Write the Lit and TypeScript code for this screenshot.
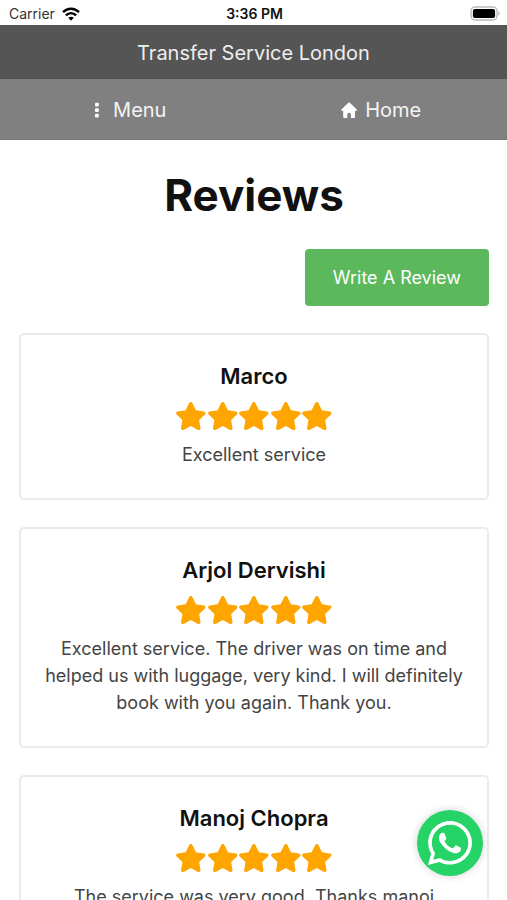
import { LitElement, html, css } from "lit";
import { customElement, property } from "lit/decorators.js";

interface Review {
  name: string;
  stars: number;
  text: string;
}

const reviews: Review[] = [
  { name: "Marco", stars: 5, text: "Excellent service" },
  {
    name: "Arjol Dervishi",
    stars: 5,
    text: "Excellent service. The driver was on time and helped us with luggage, very kind. I will definitely book with you again. Thank you.",
  },
  { name: "Manoj Chopra", stars: 5, text: "The service was very good. Thanks manoj" },
];

@customElement("status-bar")
export class StatusBar extends LitElement {
  static styles = css`
    :host {
      display: grid;
      grid-template-columns: 1fr auto 1fr;
      align-items: center;
      height: 25px;
      padding: 2px 7px 0 9px;
      box-sizing: border-box;
      background: #fff;
      color: #111;
      font-size: 14px;
      line-height: 20px;
    }
    .carrier {
      display: flex;
      align-items: center;
      gap: 7px;
      color: #333;
    }
    .wifi {
      width: 18px;
      height: 14px;
      color: #000;
    }
    .time {
      font-weight: 600;
    }
    .battery {
      justify-self: end;
      width: 30px;
      height: 15px;
    }
  `;

  render() {
    return html`
      <span class="carrier">
        Carrier
        <svg class="wifi" viewBox="0 0 18 14" fill="none" stroke="currentColor" stroke-width="2.5" aria-hidden="true">
          <path d="M1 5.2C5.6.5 12.4.5 17 5.2" />
          <path d="M3.9 8.3c3-2.9 7.2-2.9 10.2 0" />
          <path d="M9 13.7 6.2 10.8c1.6-1.5 4-1.5 5.6 0z" fill="currentColor" stroke="none" />
        </svg>
      </span>
      <span class="time">3:36 PM</span>
      <svg class="battery" viewBox="0 0 30 15" aria-hidden="true">
        <rect x="1" y="1" width="26" height="13" rx="4" fill="#fff" stroke="#bbb" stroke-width="1.4" />
        <rect x="2.9" y="2.9" width="22.2" height="9.2" rx="2" fill="#000" />
        <path d="M28.2 5.3c1.9.7 1.9 3.7 0 4.4z" fill="#bbb" />
      </svg>
    `;
  }
}

@customElement("review-card")
export class ReviewCard extends LitElement {
  @property({ attribute: false }) review!: Review;

  static styles = css`
    :host {
      display: block;
      padding: 26px 22px 30px;
      border: 2px solid #ebebeb;
      border-radius: 5px;
      text-align: center;
    }
    .name {
      margin: 0;
      color: #111;
      font-size: 22px;
      font-weight: 600;
      line-height: 30px;
    }
    .stars {
      display: flex;
      align-items: center;
      width: 158px;
      height: 50px;
      margin: 0 auto;
      color: #ffa500;
    }
    .star {
      flex: 1;
      min-width: 0;
    }
    .text {
      margin: 0;
      color: #444;
      font-size: 18px;
      line-height: 27px;
    }
  `;

  render() {
    const { name, stars, text } = this.review;
    return html`
      <h2 class="name">${name}</h2>
      <div class="stars" role="img" aria-label="${stars} out of 5 stars">
        ${Array.from(
          { length: stars },
          () => html`
            <svg class="star" viewBox="0 0 576 512" fill="currentColor" aria-hidden="true">
              <path
                d="M259.3 17.8 194 150.2 47.9 171.5c-26.2 3.8-36.7 36.1-17.7 54.6l105.7 103-25 145.5c-4.5 26.3 23.2 46 46.4 33.7L288 439.6l130.7 68.7c23.2 12.2 50.9-7.4 46.4-33.7l-25-145.5 105.7-103c19-18.5 8.5-50.8-17.7-54.6L382 150.2 316.7 17.8c-11.7-23.6-45.6-23.9-57.4 0z"
              />
            </svg>
          `,
        )}
      </div>
      <p class="text">${text}</p>
    `;
  }
}

@customElement("app-root")
export class AppRoot extends LitElement {
  static styles = css`
    :host {
      display: flex;
      flex-direction: column;
      height: 100vh;
      background: #fff;
      font-family: Inter, "Liberation Sans", sans-serif;
    }
    .title {
      padding: 15px 16px 12px;
      background: #555;
      color: #eee;
      font-size: 20px;
      line-height: 27px;
      text-align: center;
    }
    .nav {
      display: grid;
      grid-template-columns: 1fr 1fr;
      background: #808080;
      border-bottom: 1px solid #777;
    }
    .link {
      display: flex;
      align-items: center;
      justify-content: center;
      gap: 8px;
      box-sizing: border-box;
      height: 60px;
      padding: 3px 0 0;
      border: 0;
      background: none;
      color: #f4f4f4;
      font: inherit;
      font-size: 20px;
      line-height: 27px;
      text-decoration: none;
    }
    .icon {
      width: 18px;
      height: 18px;
      color: #fff;
    }
    .content {
      flex: 1;
      min-height: 0;
      overflow-y: auto;
      scrollbar-width: none;
      padding: 27px 18px 27px 19px;
    }
    .heading {
      margin: 0;
      color: #111;
      font-size: 44px;
      font-weight: 700;
      line-height: 56px;
      text-align: center;
    }
    .actions {
      display: flex;
      justify-content: flex-end;
      padding: 26px 0 27px;
    }
    .write {
      padding: 15px 28px;
      border: 0;
      border-radius: 4px;
      background: #5cb85c;
      color: #fff;
      font: inherit;
      font-size: 18px;
      line-height: 27px;
    }
    .list {
      display: grid;
      gap: 27px;
    }
    .chat {
      position: fixed;
      right: 24px;
      bottom: 24px;
      display: grid;
      place-items: center;
      width: 66px;
      height: 66px;
      border-radius: 50%;
      background: #25d366;
      box-shadow: 0 0 8px rgba(0, 0, 0, 0.18);
      color: #fff;
    }
    .whatsapp {
      width: 44px;
      height: 44px;
    }
  `;

  render() {
    return html`
      <status-bar></status-bar>
      <header class="title">Transfer Service London</header>
      <nav class="nav">
        <button class="link" type="button">
          <svg class="icon" viewBox="0 0 18 18" fill="currentColor" aria-hidden="true">
            <rect x="8" y="0.8" width="3.8" height="3.8" rx="1" />
            <rect x="8" y="6.3" width="3.8" height="3.8" rx="1" />
            <rect x="8" y="11.8" width="3.8" height="3.8" rx="1" />
          </svg>
          Menu
        </button>
        <a class="link" href="#home">
          <svg class="icon" viewBox="0 0 18 18" fill="currentColor" aria-hidden="true">
            <path
              d="M9.6.6c.3-.3.7-.3 1 0l7.2 6.9c.5.5.2 1.2-.4 1.2H16v6.4c0 .5-.4.9-.9.9h-3.2v-3.6c0-2.2-3.6-2.2-3.6 0V16H5.1c-.5 0-.9-.4-.9-.9V8.7H2.8c-.6 0-.9-.7-.4-1.2z"
            />
          </svg>
          Home
        </a>
      </nav>
      <main class="content">
        <h1 class="heading">Reviews</h1>
        <div class="actions">
          <button class="write" type="button">Write A Review</button>
        </div>
        <section class="list">
          ${reviews.map((review) => html`<review-card .review=${review}></review-card>`)}
        </section>
      </main>
      <a class="chat" href="#whatsapp" aria-label="Chat on WhatsApp">
        <svg class="whatsapp" viewBox="0 32 448 448" fill="currentColor" aria-hidden="true">
          <path
            d="M380.9 97.1C339 55.1 283.2 32 223.9 32c-122.4 0-222 99.6-222 222 0 39.1 10.2 77.3 29.6 111L0 480l117.7-30.9c32.4 17.7 68.9 27 106.1 27h.1c122.3 0 224.1-99.6 224.1-222 0-59.3-25.2-115-67.1-157zm-157 341.6c-33.2 0-65.7-8.9-94-25.7l-6.7-4-69.8 18.3L72 359.2l-4.4-7c-18.5-29.4-28.2-63.3-28.2-98.2 0-101.7 82.8-184.5 184.6-184.5 49.3 0 95.6 19.2 130.4 54.1 34.8 34.9 56.2 81.2 56.1 130.5 0 101.8-84.9 184.6-186.6 184.6zm101.2-138.2c-5.5-2.8-32.8-16.2-37.9-18-5.1-1.9-8.8-2.8-12.5 2.8-3.7 5.6-14.3 18-17.6 21.8-3.2 3.7-6.5 4.2-12 1.4-32.6-16.3-54-29.1-75.5-66-5.7-9.8 5.7-9.1 16.3-30.3 1.8-3.7.9-6.9-.5-9.7-1.4-2.8-12.5-30.1-17.1-41.2-4.5-10.8-9.1-9.3-12.5-9.5-3.2-.2-6.9-.2-10.6-.2-3.7 0-9.7 1.4-14.8 6.9-5.1 5.6-19.4 19-19.4 46.3 0 27.3 19.9 53.7 22.6 57.4 2.8 3.7 39.1 59.7 94.8 83.8 35.2 15.2 49 16.5 66.6 13.9 10.7-1.6 32.8-13.4 37.4-26.4 4.6-13 4.6-24.1 3.2-26.4-1.3-2.5-5-3.9-10.5-6.6z"
          />
        </svg>
      </a>
    `;
  }
}
